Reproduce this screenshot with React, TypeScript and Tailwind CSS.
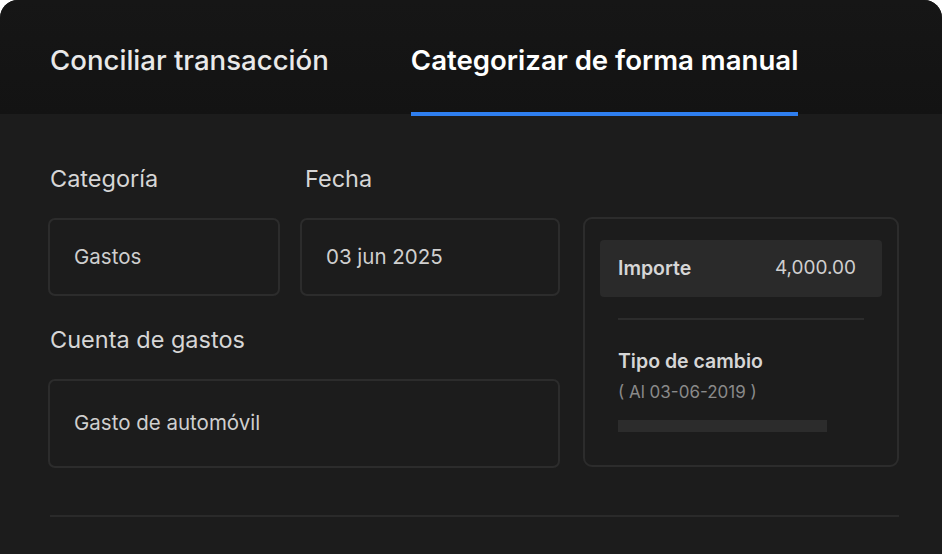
export default function App() {
  return (
    <div className="h-[554px] w-[942px] bg-white" style={{ fontFamily: "Inter, 'Noto Sans', sans-serif" }}>
      <div className="flex h-full flex-col overflow-hidden rounded-t-[18px] bg-[#1c1c1c]">
        {/* Tabs */}
        <div className="flex h-[114px] shrink-0 items-start gap-[82px] bg-gradient-to-b from-[#161616] to-[#131313] pl-[50px]">
          <div className="pt-[40px] text-[27.6px] font-medium text-[#e9e9e9]">
            Conciliar transacción
          </div>
          <div className="relative h-full pt-[40px] text-[27.6px] font-semibold text-white">
            Categorizar de forma manual
            <div className="absolute -bottom-[2px] left-0 right-0 h-[4px] bg-[#2f7ff0]" />
          </div>
        </div>

        {/* Body */}
        <div className="flex flex-col pl-[48px] pr-[43px] pt-[49px]">
          <div className="flex gap-[23px]">
            <div className="flex w-[512px] flex-col">
              <div className="flex gap-[20px]">
                <div className="flex w-[232px] flex-col">
                  <div className="pl-[2px] text-[23.5px] leading-[32px] text-[#d6d6d6]">Categoría</div>
                  <div className="mt-[23px] flex h-[78px] items-center rounded-[7px] border-2 border-[#2c2c2c] px-[24px] text-[20.5px] text-[#cfcfcf]">
                    Gastos
                  </div>
                </div>
                <div className="flex w-[260px] flex-col">
                  <div className="pl-[5px] text-[23.5px] leading-[32px] text-[#d6d6d6]">Fecha</div>
                  <div className="mt-[23px] flex h-[78px] items-center rounded-[7px] border-2 border-[#2c2c2c] px-[24px] text-[20.5px] text-[#cfcfcf]">
                    03 jun 2025
                  </div>
                </div>
              </div>
              <div className="mt-[28px] pl-[2px] text-[23.5px] leading-[32px] text-[#d6d6d6]">Cuenta de gastos</div>
              <div className="mt-[23px] flex h-[89px] items-center rounded-[7px] border-2 border-[#2c2c2c] px-[24px] text-[20.5px] text-[#cfcfcf]">
                Gasto de automóvil
              </div>
            </div>

            {/* Right card */}
            <div className="mt-[54px] flex h-[250px] flex-1 flex-col rounded-[9px] border-2 border-[#2c2c2c] px-[15px] pt-[21px]">
              <div className="flex h-[57px] items-center justify-between rounded-[4px] bg-[#2a2a2a] pl-[18px] pr-[26px]">
                <span className="text-[19.5px] font-semibold text-[#d6d6d6]">Importe</span>
                <span className="text-[19px] text-[#cfcfcf]">4,000.00</span>
              </div>
              <div className="mx-[18px] mt-[21px] h-[2px] bg-[#2c2c2c]" />
              <div className="mt-[27px] pl-[18px] text-[19.5px] font-semibold text-[#d6d6d6]">Tipo de cambio</div>
              <div className="mt-[4px] pl-[18px] text-[17px] text-[#8a8a8a]">( Al 03-06-2019 )</div>
              <div className="ml-[18px] mt-[14px] h-[12px] w-[209px] bg-[#2c2c2c]" />
            </div>
          </div>

          <div className="mt-[47px] ml-[2px] h-[2px] bg-[#2a2a2a]" />
        </div>
      </div>
    </div>
  );
}
